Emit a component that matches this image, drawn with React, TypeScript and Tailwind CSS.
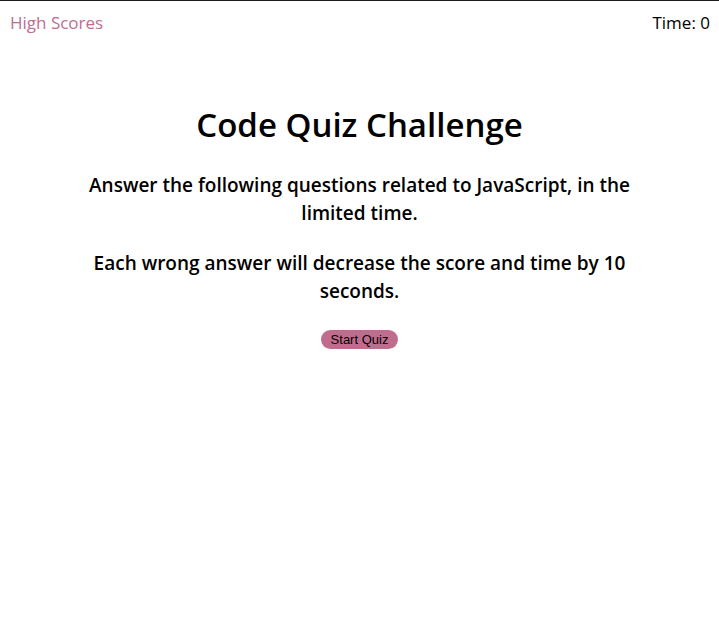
import React from "react";

export default function App() {
  return (
    <div className="min-h-[638px] bg-white border-t border-[#1c1c1c]">
      <header className="flex justify-between items-center pl-[10px] pr-[9px] h-[44px] font-['Open_Sans',sans-serif] text-[17px]">
        <a className="text-[#c06c8f]">High Scores</a>
        <span className="text-black">Time: 0</span>
      </header>
      <main className="flex flex-col items-center mx-auto w-[600px] text-center font-['Open_Sans',sans-serif] text-black">
        <h1 className="mt-[60px] text-[33px] leading-[40px] font-semibold">Code Quiz Challenge</h1>
        <p className="mt-[26px] text-[19px] leading-[28px] font-semibold">
          Answer the following questions related to JavaScript, in the limited time.
        </p>
        <p className="mt-[22px] text-[19px] leading-[28px] font-semibold">
          Each wrong answer will decrease the score and time by 10 seconds.
        </p>
        <button className="mt-[25px] h-[19px] px-[10px] rounded-full bg-[#c06c8f] text-[13px] leading-[19px] font-['Liberation_Sans',Arial,sans-serif] text-black">
          Start Quiz
        </button>
      </main>
    </div>
  );
}
